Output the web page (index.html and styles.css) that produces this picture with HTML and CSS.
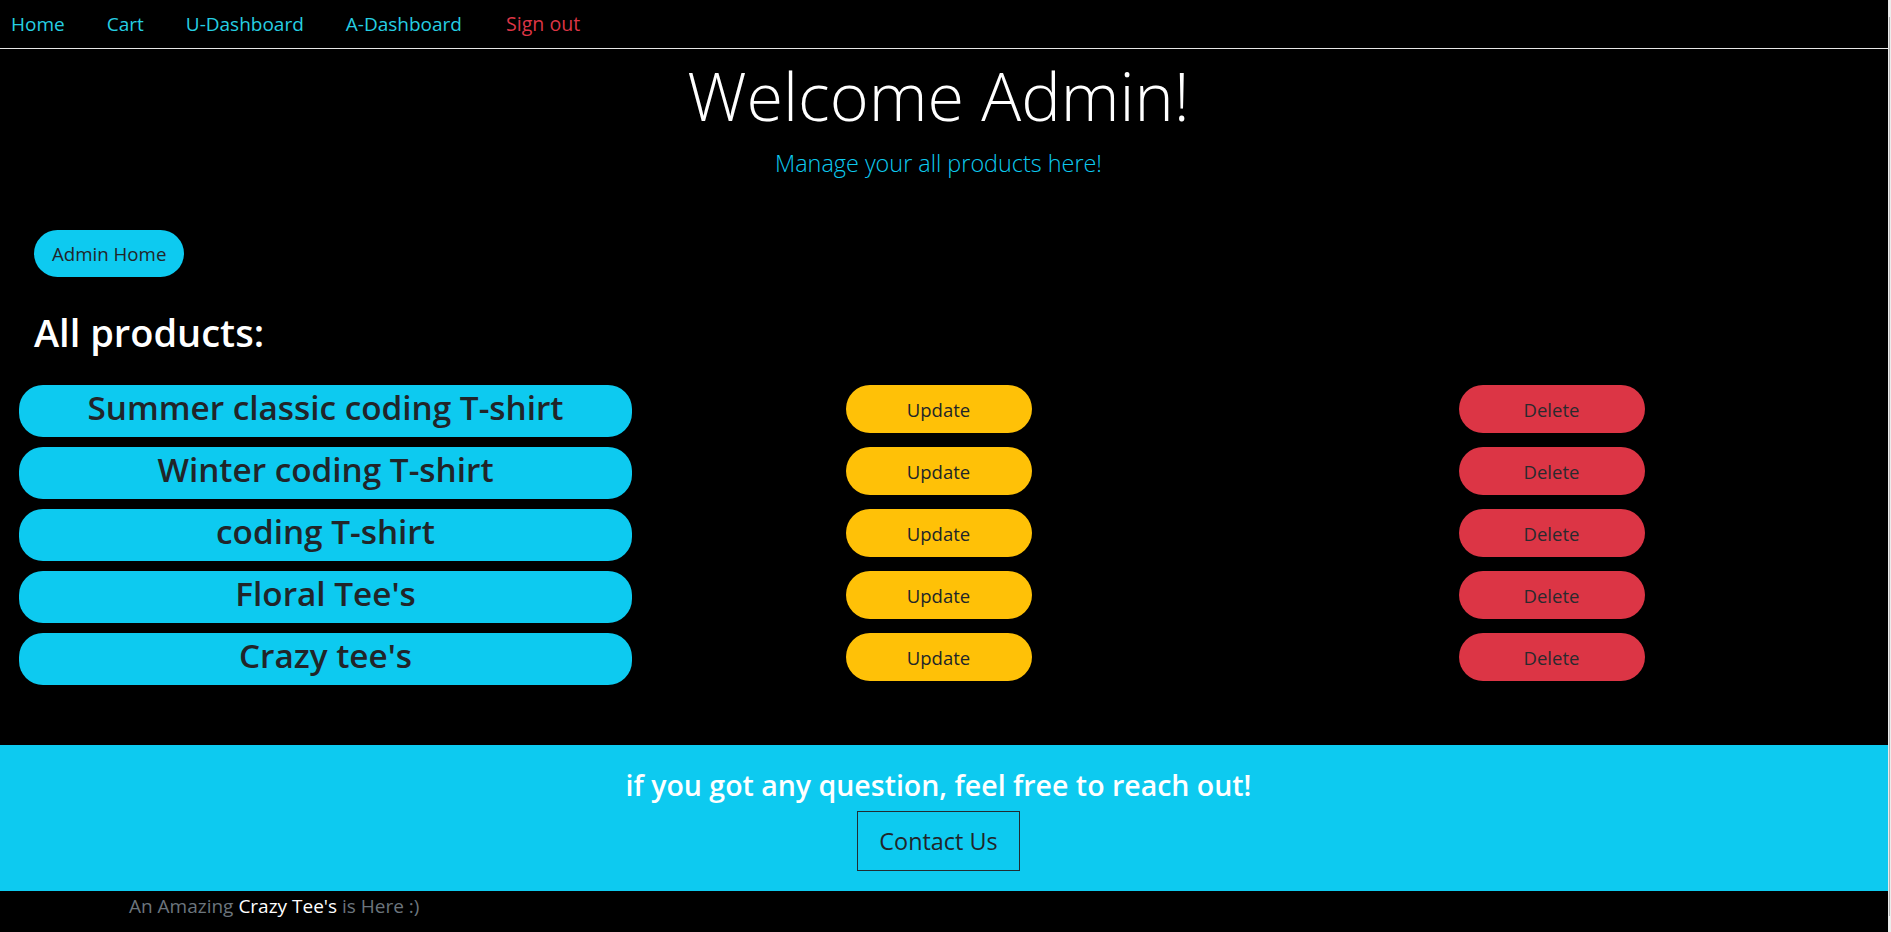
FILE: index.html
```html
<!DOCTYPE html>
<html lang="en">
<head>
<meta charset="utf-8">
<title>Admin Dashboard</title>
<link rel="stylesheet" href="styles.css">
</head>
<body>
<nav class="topnav">
  <a class="nav-link" href="#">Home</a>
  <a class="nav-link" href="#">Cart</a>
  <a class="nav-link" href="#">U-Dashboard</a>
  <a class="nav-link" href="#">A-Dashboard</a>
  <a class="nav-link nav-link--danger" href="#">Sign out</a>
</nav>
<header class="jumbo">
  <h1 class="jumbo-title">Welcome Admin!</h1>
  <p class="jumbo-lead">Manage your all products here!</p>
</header>
<main class="admin">
  <div class="admin-top"><a class="btn-pill" href="#">Admin Home</a></div>
  <h2 class="section-title">All products:</h2>
  <div class="product-list">
    <div class="product-row">
      <div class="product-name">Summer classic coding T-shirt</div>
      <div class="product-action"><button class="btn-action btn-update">Update</button></div>
      <div class="product-action"><button class="btn-action btn-delete">Delete</button></div>
    </div>
    <div class="product-row">
      <div class="product-name">Winter coding T-shirt</div>
      <div class="product-action"><button class="btn-action btn-update">Update</button></div>
      <div class="product-action"><button class="btn-action btn-delete">Delete</button></div>
    </div>
    <div class="product-row">
      <div class="product-name">coding T-shirt</div>
      <div class="product-action"><button class="btn-action btn-update">Update</button></div>
      <div class="product-action"><button class="btn-action btn-delete">Delete</button></div>
    </div>
    <div class="product-row">
      <div class="product-name">Floral Tee's</div>
      <div class="product-action"><button class="btn-action btn-update">Update</button></div>
      <div class="product-action"><button class="btn-action btn-delete">Delete</button></div>
    </div>
    <div class="product-row">
      <div class="product-name">Crazy tee's</div>
      <div class="product-action"><button class="btn-action btn-update">Update</button></div>
      <div class="product-action"><button class="btn-action btn-delete">Delete</button></div>
    </div>
  </div>
</main>
<footer class="site-footer">
  <div class="contact-band">
    <h4 class="contact-title">if you got any question, feel free to reach out!</h4>
    <button class="btn-contact">Contact Us</button>
  </div>
  <div class="footer-note">An Amazing <span class="footer-brand">Crazy Tee's</span> is Here :)</div>
</footer>
<div class="scrollbar"><div class="scrollbar-thumb"></div></div>
</body>
</html>
```

FILE: styles.css
```css
html {
  overflow: hidden;
  background: #000;
}

body {
  margin: 0 3px 0 0;
  background: #000;
  color: #fff;
  font-family: "Open Sans", "Noto Sans", sans-serif;
}

/* top navigation */
.topnav {
  display: flex;
  align-items: center;
  height: 48px;
  padding-left: 11px;
  gap: 42px;
  border-bottom: 1px solid #e6e6e6;
}

.nav-link {
  font-size: 19px;
  line-height: 48px;
  color: #26cfe3;
  text-decoration: none;
}

.nav-link--danger {
  margin-left: 2px;
  font-size: 19.6px;
  color: #dc3545;
}

/* jumbotron */
.jumbo {
  text-align: center;
  padding: 7px 11px 0 0;
}

.jumbo-title {
  margin: 0;
  font-size: 66.5px;
  font-weight: 300;
  line-height: 78px;
}

.jumbo-lead {
  margin: 12px 0 0;
  font-size: 23.4px;
  font-weight: 300;
  line-height: 34px;
  color: #0dcaf0;
}

/* admin area */
.admin {
  padding-left: 19px;
}

.admin-top {
  display: flex;
  margin-top: 50px;
  padding-left: 15px;
}

.btn-pill {
  display: block;
  height: 47px;
  line-height: 47px;
  padding: 0 18px;
  border-radius: 24px;
  background: #0dcaf0;
  color: #212529;
  font-size: 18.7px;
  text-decoration: none;
}

.section-title {
  margin: 32px 0 0 15px;
  font-size: 38px;
  font-weight: 600;
  line-height: 46px;
}

.product-list {
  display: flex;
  flex-direction: column;
  gap: 10px;
  margin-top: 30px;
}

.product-row {
  display: grid;
  grid-template-columns: repeat(3, 613px);
  align-items: start;
}

.product-name {
  box-sizing: border-box;
  height: 52px;
  padding-bottom: 7px;
  line-height: 45px;
  border-radius: 24px;
  background: #0dcaf0;
  color: #212529;
  text-align: center;
  font-size: 33.3px;
  font-weight: 600;
}

.product-action {
  display: flex;
  justify-content: center;
}

.btn-action {
  width: 186px;
  height: 48px;
  padding: 0;
  border: 0;
  border-radius: 24px;
  font-family: inherit;
  font-size: 18.5px;
  line-height: 50px;
  color: #212529;
}

.btn-update {
  background: #ffc107;
}

.btn-delete {
  background: #dc3545;
  color: #2a2a2e;
}

/* footer */
.site-footer {
  margin-top: 60px;
}

.contact-band {
  display: flex;
  flex-direction: column;
  align-items: center;
  padding: 20px 11px 20px 0;
  background: #0dcaf0;
}

.contact-title {
  margin: 0;
  font-size: 28.5px;
  font-weight: 600;
  line-height: 40px;
  color: #fff;
}

.btn-contact {
  box-sizing: border-box;
  margin-top: 6px;
  height: 60px;
  padding: 0 21.5px;
  border: 1px solid #1f2d33;
  border-radius: 0;
  background: transparent;
  color: #212529;
  font-family: inherit;
  font-size: 23.4px;
  line-height: 58px;
}

.footer-note {
  height: 41px;
  padding-left: 129px;
  font-size: 19px;
  line-height: 31px;
  color: #6c757d;
}

.footer-brand {
  color: #fff;
}

/* thin overlay scrollbar at the right edge */
.scrollbar {
  position: fixed;
  top: 0;
  right: 0;
  width: 3px;
  height: 100%;
  background: #ececec;
}

.scrollbar-thumb {
  width: 1px;
  height: 899px;
  margin: 17px 0 0 1px;
  background: #b4b4b4;
}
```
